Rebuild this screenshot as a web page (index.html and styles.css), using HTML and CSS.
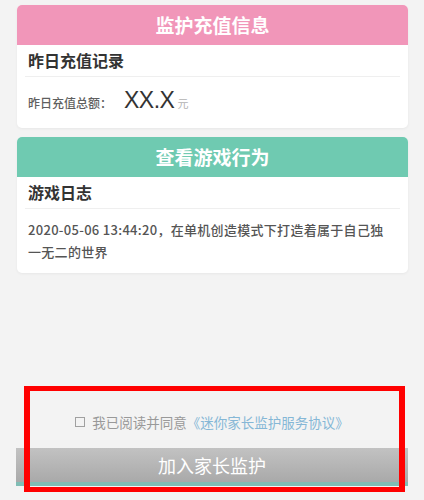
FILE: index.html
```html
<!DOCTYPE html>
<html lang="zh">
<head>
<meta charset="utf-8">
<link rel="stylesheet" href="styles.css">
</head>
<body>
<div class="page">
  <section class="card">
    <div class="card-head pink">监护充值信息</div>
    <div class="row title">昨日充值记录</div>
    <div class="row amount">
      <span class="label">昨日充值总额：</span>
      <span class="value">XX.X</span>
      <span class="unit">元</span>
    </div>
  </section>
  <section class="card second">
    <div class="card-head green">查看游戏行为</div>
    <div class="row title">游戏日志</div>
    <div class="row log">2020-05-06 13:44:20，在单机创造模式下打造着属于自己独一无二的世界</div>
  </section>
  <footer class="footer">
    <div class="agree"><span class="box"></span><span>我已阅读并同意</span><span class="link">《迷你家长监护服务协议》</span></div>
    <div class="btn">加入家长监护</div>
  </footer>
  <div class="highlight"></div>
</div>
</body>
</html>
```

FILE: styles.css
```css
html, body {
  margin: 0;
  padding: 0;
  background: #f3f3f3;
}
body {
  font-family: "Noto Sans CJK SC", "Noto Sans", sans-serif;
  width: 424px;
  height: 500px;
  overflow: hidden;
}
.page {
  position: relative;
  height: 500px;
  display: flex;
  flex-direction: column;
  padding: 5px 16px 0 17px;
  box-sizing: border-box;
}
.card {
  background: #fff;
  border-radius: 5px;
  box-shadow: 0 1px 3px rgba(0,0,0,0.05);
  overflow: hidden;
}
.card.second {
  margin-top: 9px;
}
.card-head {
  height: 40px;
  line-height: 40px;
  text-align: center;
  color: #fff;
  font-size: 19px;
  font-weight: bold;
}
.card-head.pink { background: #f196b9; }
.card-head.green { background: #6fcab1; }
.row {
  margin: 0 8px;
  padding: 0 3px;
}
.row.title {
  height: 31px;
  line-height: 31px;
  font-size: 16px;
  font-weight: bold;
  color: #333;
  border-bottom: 1px solid #efefef;
}
.row.amount {
  height: 51px;
  display: flex;
  align-items: baseline;
  padding-top: 10px;
  box-sizing: border-box;
}
.label {
  font-size: 12px;
  color: #5f5f5f;
  font-weight: 500;
}
.value {
  font-family: "Liberation Sans", Arial, sans-serif;
  font-size: 23px;
  color: #333;
  margin-left: 12px;
  letter-spacing: -0.5px;
}
.unit {
  font-size: 11px;
  color: #b3b3b3;
  margin-left: 3px;
}
.row.log {
  padding-top: 10px;
  padding-bottom: 10px;
  padding-right: 12px;
  font-size: 13px;
  line-height: 22px;
  letter-spacing: 0.3px;
  color: #555;
  font-weight: 500;
}
.footer {
  margin-top: auto;
  margin-left: -1px;
  display: flex;
  flex-direction: column;
  align-items: stretch;
  padding-bottom: 14px;
}
.agree {
  display: flex;
  justify-content: center;
  align-items: center;
  font-size: 13.5px;
  color: #999;
  height: 20px;
  margin-bottom: 16px;
}
.box {
  width: 8px;
  height: 8px;
  border: 1px solid #a0a0a0;
  margin-right: 7px;
}
.link {
  color: #85b7d6;
}
.btn {
  height: 34px;
  line-height: 34px;
  text-align: center;
  color: #fff;
  font-size: 18px;
  background: linear-gradient(#c2c2c2, #a9a9a9);
  border-bottom: 4px solid #80bdb5;
}
.highlight {
  position: absolute;
  left: 24px;
  top: 386px;
  width: 381px;
  height: 106px;
  box-sizing: border-box;
  border: 5px solid #ff0000;
  border-left-width: 6px;
  border-right-width: 6px;
  pointer-events: none;
}
```
